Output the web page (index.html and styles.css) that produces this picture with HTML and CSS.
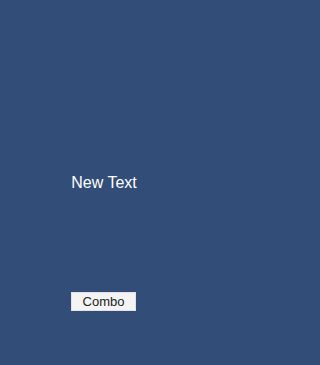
FILE: index.html
```html
<!DOCTYPE html>
<html>
<head>
<meta charset="utf-8">
<link rel="stylesheet" href="styles.css">
</head>
<body>
<div class="screen">
  <div class="label">New Text</div>
  <button class="combo">Combo</button>
</div>
</body>
</html>
```
FILE: styles.css
```css
html, body {
  margin: 0;
  padding: 0;
  background: #314d78;
}
.screen {
  width: 208px;
  height: 365px;
  display: flex;
  flex-direction: column;
  align-items: center;
  font-family: "Liberation Sans", Arial, sans-serif;
}
.label {
  margin-top: 174px;
  font-size: 16px;
  line-height: 18px;
  color: #ffffff;
}
.combo {
  margin-top: 100px;
  margin-right: 1px;
  width: 65px;
  height: 19px;
  padding: 0;
  border: 1px solid #e2e2e2;
  background: #f4f4f4;
  color: #222222;
  font-family: "Liberation Sans", Arial, sans-serif;
  font-size: 13px;
  line-height: 17px;
}
```
